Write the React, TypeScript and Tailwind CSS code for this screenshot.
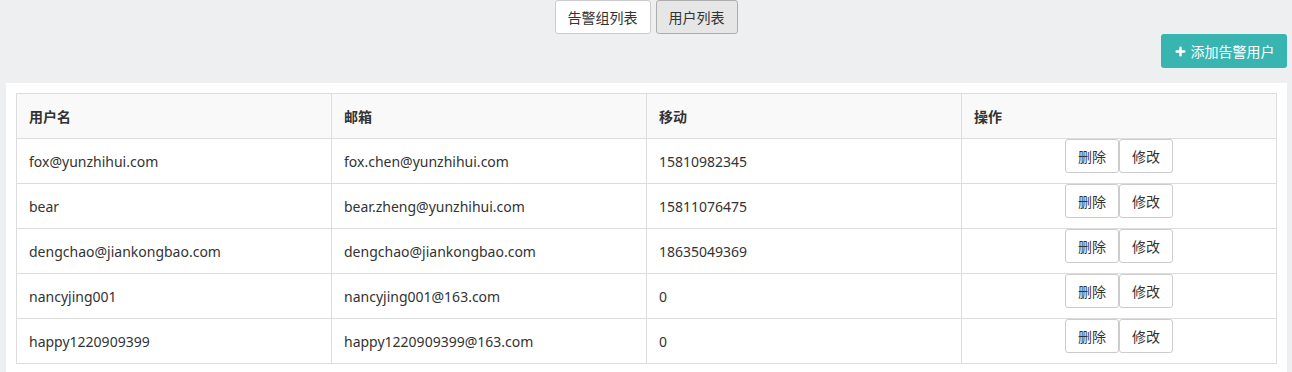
import { Plus } from 'lucide-react';

const users = [
  { name: 'fox@yunzhihui.com', email: 'fox.chen@yunzhihui.com', mobile: '15810982345' },
  { name: 'bear', email: 'bear.zheng@yunzhihui.com', mobile: '15811076475' },
  { name: 'dengchao@jiankongbao.com', email: 'dengchao@jiankongbao.com', mobile: '18635049369' },
  { name: 'nancyjing001', email: 'nancyjing001@163.com', mobile: '0' },
  { name: 'happy1220909399', email: 'happy1220909399@163.com', mobile: '0' },
];

const font = "font-['Segoe_UI','Noto_Sans','Noto_Sans_CJK_SC',sans-serif]";

export default function App() {
  return (
    <div className={`min-h-screen bg-[#eeeff1] text-[14px] text-[#333] ${font}`}>
      {/* Tabs */}
      <div className="flex justify-center gap-[5px]">
        <button className="h-[34px] w-[96px] rounded-[3px] border border-[#ccc] bg-white text-[14px] text-[#333]">
          告警组列表
        </button>
        <button className="h-[34px] w-[82px] rounded-[3px] border border-[#adadad] bg-[#e6e6e6] text-[14px] text-[#333]">
          用户列表
        </button>
      </div>

      {/* Add button */}
      <div className="flex justify-end pr-[5px]">
        <button className="flex h-[34px] w-[126px] items-center justify-center gap-[4px] rounded-[3px] bg-[#38b5b1] text-[14px] text-white">
          <Plus className="h-[13px] w-[13px]" strokeWidth={4.5} />
          添加告警用户
        </button>
      </div>

      {/* Panel */}
      <div className="ml-[6px] mr-[5px] mt-[15px] bg-white px-[10px] pt-[10px] pb-[10px]">
        <table className="w-full table-fixed border-collapse border border-[#ddd]">
          <thead>
            <tr className="h-[45px] bg-[#f9f9f9]">
              {['用户名', '邮箱', '移动', '操作'].map((h) => (
                <th key={h} className="border border-[#ddd] px-[12px] text-left font-bold">
                  {h}
                </th>
              ))}
            </tr>
          </thead>
          <tbody>
            {users.map((u) => (
              <tr key={u.name} className="h-[45px]">
                <td className="border border-[#ddd] px-[12px]">{u.name}</td>
                <td className="border border-[#ddd] px-[12px]">{u.email}</td>
                <td className="border border-[#ddd] px-[12px]">{u.mobile}</td>
                <td className="border border-[#ddd] px-[12px] pb-[10px] pt-0 align-top">
                  <div className="flex justify-center">
                    <button className="h-[34px] w-[54px] rounded-[3px] border border-[#ccc] bg-white text-[14px]">
                      删除
                    </button>
                    <button className="h-[34px] w-[54px] rounded-[3px] border border-[#ccc] bg-white text-[14px]">
                      修改
                    </button>
                  </div>
                </td>
              </tr>
            ))}
          </tbody>
        </table>
      </div>
    </div>
  );
}
